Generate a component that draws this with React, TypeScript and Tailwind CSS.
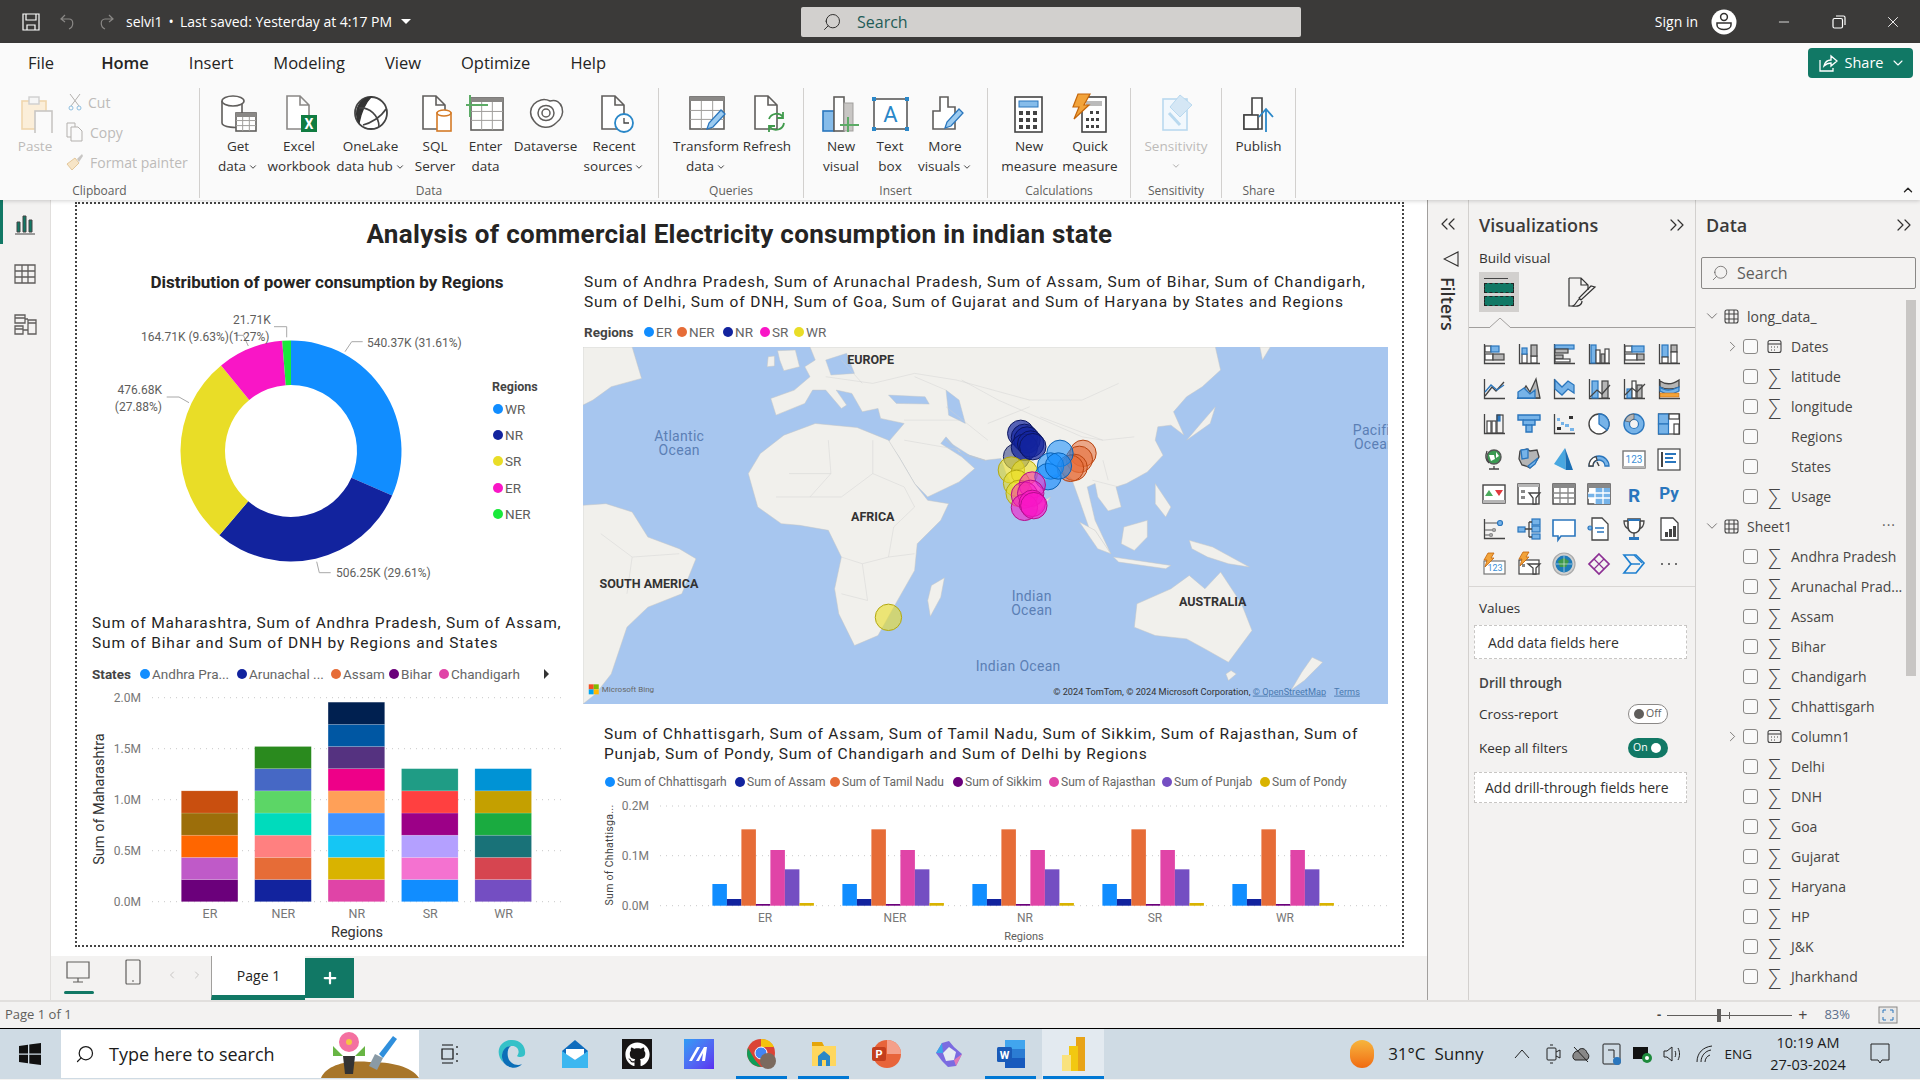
import type { ReactNode } from "react";
import { ChevronDown, ChevronRight, ChevronUp, ChevronsLeft, ChevronsRight, Search, Minus, X, Plus, ChevronLeft } from "lucide-react";
import { FaGithub } from "react-icons/fa";

const din = "font-['Roboto',sans-serif]";

// small svg helpers for the icon sets
const R = (x: number, y: number, w: number, h: number, f = "none", s = "none", sw = 1.2) => (
  <rect x={x} y={y} width={w} height={h} fill={f} stroke={s} strokeWidth={sw} />
);
const P = (d: string, s = "#444", f = "none", sw = 1.3) => <path d={d} stroke={s} fill={f} strokeWidth={sw} />;
const C = (x: number, y: number, r: number, f = "none", s = "none", sw = 1.2) => (
  <circle cx={x} cy={y} r={r} fill={f} stroke={s} strokeWidth={sw} />
);
const d = "#444";
const b = "#2a76bd";
const l = "#76b3e8";
const g = "#b5b5b5";
const ax = P("M2.5 2V21.5H23");
const doc = (c = "#605e5c") => P("M8 3H21L30 12V36H8ZM21 3V12H30", c, "#fff", 1.6);
const bolt = (x = 0, y = 0) => (
  <path transform={`translate(${x} ${y})`} d="M6 0H12L9 5H12L3 14L5 7H2Z" fill="#f2a33a" stroke="#c4650a" strokeWidth="0.8" />
);

const vizIcons: ReactNode[] = [
  <>{ax}{R(3, 4, 6, 6, "#fff", d)}{R(9, 4, 8, 6, l, b)}{R(3, 12, 8, 6, "#fff", d)}{R(11, 12, 11, 6, g, d)}</>,
  <>{ax}{R(5, 12, 5, 9, "#fff", d)}{R(5, 6, 5, 6, l, b)}{R(14, 14, 6, 7, "#fff", d)}{R(14, 3, 6, 11, g, d)}</>,
  <>{ax}{R(3, 3, 19, 4, l, b)}{R(3, 7, 13, 4, g, d)}{R(3, 13, 8, 4, g, d)}{R(3, 17, 15, 3, "#fff", d)}</>,
  <>{ax}{R(4, 3, 5, 18, l, b)}{R(9, 8, 4, 13, "#fff", d)}{R(14, 12, 4, 9, g, d)}{R(18, 7, 4, 14, "#fff", d)}</>,
  <>{ax}{R(3, 4, 7, 6, "#fff", d)}{R(10, 4, 12, 6, l, b)}{R(3, 12, 12, 6, "#fff", d)}{R(15, 12, 7, 6, g, d)}</>,
  <>{ax}{R(5, 3, 6, 12, l, b)}{R(5, 15, 6, 6, "#fff", d)}{R(14, 3, 6, 7, g, d)}{R(14, 10, 6, 11, "#fff", d)}</>,
  <>{ax}{P("M3 19L10 10L14 14L22 5", d)}{P("M3 15L9 8L15 13L22 8", b)}</>,
  <>{P("M1 21H23")}{P("M1 21L9 9L13 15L19 2L23 21Z", d, g)}{P("M1 21L8 12L14 21Z", b, "#fff")}{P("M1 21V15L7 11L13 17L18 13V21Z", b, l)}</>,
  <>{ax}{P("M3 3L10 10L16 4L22 8V16L16 12L10 18L3 12Z", b, l)}</>,
  <>{ax}{R(5, 4, 6, 17, l, b)}{R(15, 4, 6, 17, g, d)}{P("M3 20L10 13L15 17L23 8", d)}</>,
  <>{ax}{R(5, 12, 5, 9, l, b)}{R(10, 4, 4, 17, "#fff", d)}{R(15, 8, 5, 13, g, d)}{P("M3 18L10 11L15 15L23 7", d)}</>,
  <>{ax}{P("M3 4Q12 10 22 3V10Q12 14 3 10Z", d, g)}{P("M3 10Q10 16 22 10V14Q12 20 3 14Z", b, l)}{P("M3 16H22V20H3Z", "#c4650a", "#f2a33a", 0.5)}</>,
  <>{ax}{R(5, 9, 4, 12, "#fff", d)}{R(10, 9, 4, 12, "#fff", d)}{R(15, 3, 3, 6, b, b)}{R(15, 3, 6, 18, "none", d)}</>,
  <>{P("M1 3H23V8H18V13H15V20H9V13H6V8H1Z", b, l, 1.4)}{P("M6 8H18M9 13H15", b)}</>,
  <>{ax}{R(5, 6, 3, 3, l)}{R(9, 10, 3, 3, l)}{R(5, 15, 4, 3, "#333")}{R(13, 12, 4, 3, l)}{R(17, 4, 4, 3, "#333")}{R(18, 16, 4, 3, l)}</>,
  <>{C(12, 12, 10, "#fff", d, 1.4)}{P("M12 2A10 10 0 0 1 20 18L12 12Z", b, l)}</>,
  <>{C(12, 12, 10, l, b, 1.4)}{C(12, 12, 4.5, "#f3f2f1", b)}{P("M12 2A10 10 0 0 0 3 9L8 10A5 5 0 0 1 12 7Z", d, g, 0.6)}</>,
  <>{R(1.5, 2, 21, 20, "#fff", d)}{R(1.5, 2, 10, 10, l, b)}{R(1.5, 12, 10, 10, l, b)}{R(12, 2, 10, 5, "#fff", d)}{R(17, 12, 5, 10, "#fff", d)}</>,
  <>{C(12, 10, 7, "#3a9a52", "#555", 1.4)}{P("M7 8H12L13 12L9 14ZM14 5L17 9L14 11Z", "none", "#fff")}{P("M5 4Q2 12 7 16M12 19V22M7 22H17", d)}</>,
  <>{P("M3 4L10 2L13 4L20 3L22 10L18 16L13 21L9 19L5 18L2 12Z", d, g)}{P("M4 3L11 2L11 11L5 12Z", b, l)}{P("M11 19L21 11L18 17L13 21Z", b, l)}</>,
  <>{P("M13 1L14 23L2 17Z", "none", "#48a7e0")}{P("M13 1L21 23L14 23Z", "none", "#1a6fb4")}</>,
  <>{P("M2 19A10 10 0 0 1 22 19H18A6 6 0 0 0 6 19Z", b, l)}{P("M2 19A10 10 0 0 1 9 9.5L10 13A6 6 0 0 0 6 19Z", d, "#fff")}{P("M12 19L10 15", d, "none", 1.6)}</>,
  <>{R(1, 4, 22, 17, "#fff", "#777", 1.4)}{R(1, 19, 22, 2, g)}<text x="12" y="16" textAnchor="middle" fontSize="10" fill="#3d8fd6" fontFamily="Roboto">123</text></>,
  <>{R(1, 2, 22, 21, "#fff", d)}{R(4, 5, 2, 15, d)}{R(8, 6, 11, 2, b)}{R(8, 10, 8, 2, b)}{R(8, 14, 11, 2, b)}</>,
  <>{R(1, 3, 22, 18, "#fff", d, 1.4)}{R(1, 18, 22, 3, g)}<path d="M3 14L7 8L11 14Z" fill="#4bab5c" /><path d="M13 8H21L17 14Z" fill="#e0393e" /></>,
  <>{R(1, 2, 21, 20, "#fff", d, 1.4)}{R(1, 2, 21, 3, g)}{R(4, 8, 4, 3, "#888")}{R(4, 14, 4, 3, "#888")}{P("M12 11H23L19 16V22H16V16Z", d, "#fff")}</>,
  <>{R(1, 2, 22, 20, "#fff", d, 1.4)}{R(1, 2, 22, 4, "#888")}{P("M1 11H23M1 16H23M8 6V22M16 6V22", "#888")}</>,
  <>{R(1, 2, 22, 20, "#fff", d, 1.4)}{R(1, 2, 22, 4, "#888")}{R(8, 6, 15, 16, l)}{R(1, 11, 7, 5, l)}{P("M1 11H23M1 16H23M8 6V22M16 6V22", "#fff")}</>,
  <><text x="12" y="20" textAnchor="middle" fontSize="19" fontWeight="700" fill="#2a76bd" fontFamily="Roboto">R</text></>,
  <><text x="12" y="17" textAnchor="middle" fontSize="17" fontWeight="700" fill="#2a76bd" fontFamily="Roboto">Py</text></>,
  <>{ax}{P("M3 6H16M3 13H11M3 18H8", "#888")}{C(18, 6, 2.5, l, b)}{C(12, 13, 1.5, g, "#888")}{C(9, 18, 1.5, g, "#888")}</>,
  <>{R(1, 10, 7, 5, l, b)}{R(15, 2, 8, 6, l, b)}{R(15, 9, 8, 6, l, b)}{R(15, 17, 8, 5, l, b)}{P("M8 12H12M12 5V20M12 5H15M12 12H15M12 20H15", d)}</>,
  <>{P("M1 3H23V19H9L6 23V19H1Z", b, "#fff", 1.6)}</>,
  <>{P("M5 1H15L21 7V23H5Z", d, "#fff")}{C(3, 11, 2, l, b)}{P("M8 11H17M10 15H17", b)}</>,
  <>{P("M6 2H18V10A6 6 0 0 1 6 10Z", d, "#fff", 1.6)}{R(6, 2, 12, 2, b)}{P("M6 4H2C2 9 4 11 7 12M18 4H22C22 9 20 11 17 12M12 16V20", d)}{R(7, 20, 10, 3, b)}</>,
  <>{P("M4 1H16L21 6V23H4Z", d, "#fff")}{R(8, 15, 3, 5, "#444")}{R(12, 12, 3, 8, "#444")}{R(16, 9, 3, 11, "#444")}</>,
  <>{R(2, 9, 21, 13, "#fff", "#777")}<text x="13" y="19" textAnchor="middle" fontSize="9" fill="#3d8fd6" fontFamily="Roboto">123</text>{bolt(0, 1)}</>,
  <>{R(2, 8, 20, 14, "#fff", d)}{P("M11 12H23L19 16V22H16V16Z", d, "#fff")}{R(5, 12, 3, 3, "#888")}{bolt(0, 0)}</>,
  <>{C(12, 12, 11, "#d0d0d0", "#aaa")}{C(12, 12, 8.5, "#1e7bb8")}{P("M6 9L12 6L17 9L14 15L8 15Z", "none", "#3f9a4b")}{P("M4 12H20M12 3.5V20", "#e8f2f7", "none", 0.6)}</>,
  <>{P("M12 2L22 12L12 22L2 12Z", "#8c2f94", "none", 1.7)}{P("M7 7L17 17M17 7L7 17", "#8c2f94", "none", 1.2)}</>,
  <>{P("M2 3H14L22 11L14 21H2L9 12Z", "#1f80d0", "none", 1.7)}{P("M9 12H18M12 3L20 11", "#1f80d0")}</>,
  <>{C(5, 12, 1, "#444")}{C(12, 12, 1, "#444")}{C(19, 12, 1, "#444")}</>,
];

const I = ({ children, w = 40 }: { children: ReactNode; w?: number }) => (
  <svg width={w} height="40" viewBox={`0 0 ${w} 40`} className="shrink-0">{children}</svg>
);
const tableGrid = (x: number, y: number, w: number, h: number, c = "#605e5c") => (
  <>
    {R(x, y, w, h, "#fff", c, 1.6)}
    {R(x, y, w, 4, "#8a8886")}
    {P(`M${x} ${y + (h * 0.42)}H${x + w}M${x} ${y + (h * 0.7)}H${x + w}M${x + w / 3} ${y + 4}V${y + h}M${x + (2 * w) / 3} ${y + 4}V${y + h}`, "#a19f9d", "none", 1)}
  </>
);
const pencil = (x: number, y: number) => (
  <path transform={`translate(${x} ${y})`} d="M14 0L18 4L6 17L0 19L2 13Z" fill="#9ccbf0" stroke="#2a76bd" strokeWidth="1.3" />
);
const barsOutline = (c = "#605e5c") => P("M8 36V18H15V4H23V14H30V36Z", c, "#fff", 1.6);

const ribbonIcons: Record<string, ReactNode> = {
  paste: <>{R(7, 8, 24, 28, "#fbeed9", "#f0d6ad", 1.6)}{R(14, 4, 10, 7, "#f6f6f6", "#cfcfcf", 1.4)}{R(20, 18, 17, 23, "#fafafa", "#c8c6c4", 1.6)}</>,
  get: <>{P("M4 8V30C4 34 20 36 24 33V10", "#605e5c", "#fff", 1.6)}<ellipse cx="15" cy="8" rx="11" ry="5" fill="#fff" stroke="#605e5c" strokeWidth="1.6" />{tableGrid(18, 20, 20, 18)}</>,
  excel: <>{doc("#8a8886")}{R(22, 22, 16, 17, "#107c41")}<text x="30" y="36" textAnchor="middle" fontSize="14" fontWeight="700" fill="#fff" fontFamily="Roboto">X</text></>,
  lake: <>{C(20, 20, 16, "#fff", "#444", 1.8)}{P("M20 4C8 6 2 18 8 30C10 20 14 10 20 4Z", "#333", "#333")}{P("M8 15C18 14 28 22 28 34M12 32C20 30 30 24 35 16", "#444", "none", 1.6)}</>,
  sql: <>{doc()}{R(22, 20, 14, 18, "#fff", "#d47a26", 1.6)}<ellipse cx="29" cy="20" rx="7" ry="3" fill="#fff" stroke="#d47a26" strokeWidth="1.6" /></>,
  enter: <>{tableGrid(5, 5, 32, 32)}{P("M4 2V24M-2 12H22", "#5cab66", "none", 2)}</>,
  dataverse: <>{P("M8 28C-2 16 12 2 24 8C36 4 42 22 30 30C24 36 14 36 8 28Z", "#605e5c", "#fff", 1.5)}{P("M12 20C12 10 28 10 28 20C28 30 12 30 12 20Z", "#605e5c", "none", 1.5)}{C(20, 20, 4, "none", "#605e5c", 1.5)}</>,
  recent: <>{doc()}{C(30, 30, 9, "#fff", "#2a87c8", 1.8)}{P("M30 25V30H35", "#444")}</>,
  transform: <>{tableGrid(4, 4, 34, 32)}{pencil(21, 17)}</>,
  refresh: <>{doc()}{P("M22 26A8 8 0 0 1 36 24M37 30A8 8 0 0 1 23 34M36 19V25H30M22 39V33H28", "#3f9a4b", "none", 1.8)}</>,
  newvisual: <>{R(2, 18, 11, 20, "#86bcea", "#2a76bd", 1.6)}{R(13, 4, 10, 34, "#fff", "#605e5c", 1.6)}{R(23, 10, 9, 28, "#c8c6c4", "#a19f9d", 1)}{P("M27 24V39M19 32H38", "#5cab66", "none", 2)}</>,
  textbox: <>{R(4, 6, 33, 30, "#fff", "#444", 1.4)}{R(2, 4, 4, 4, "#2a87c8")}{R(35, 4, 4, 4, "#2a87c8")}{R(2, 34, 4, 4, "#2a87c8")}{R(35, 34, 4, 4, "#2a87c8")}<text x="20.5" y="29" textAnchor="middle" fontSize="22" fill="#2a87c8" fontFamily="Roboto">A</text></>,
  morevisuals: <>{barsOutline()}{pencil(20, 16)}</>,
  measure: <>{R(6, 4, 27, 35, "#fff", "#444", 1.6)}{R(10, 8, 19, 6, "#86bcea", "#2a76bd", 1)}{R(10, 18, 4, 4, "#444")}{R(17, 18, 4, 4, "#444")}{R(24, 18, 4, 4, "#444")}{R(10, 25, 4, 4, "#444")}{R(17, 25, 4, 4, "#444")}{R(24, 25, 4, 4, "#444")}{R(10, 32, 4, 4, "#444")}{R(17, 32, 4, 4, "#444")}{R(24, 32, 4, 4, "#444")}</>,
  quick: <>{R(12, 4, 24, 35, "#fff", "#444", 1.6)}{R(16, 8, 16, 5, "#bbb")}{R(20, 18, 3, 3, "#444")}{R(26, 18, 3, 3, "#444")}{R(16, 25, 3, 3, "#444")}{R(21, 25, 3, 3, "#444")}{R(26, 25, 3, 3, "#444")}{R(16, 32, 3, 3, "#444")}{R(21, 32, 3, 3, "#444")}{R(26, 32, 3, 3, "#444")}<path d="M8 1H20L14 12H19L4 26L9 14H3Z" fill="#f2a33a" stroke="#c4650a" strokeWidth="1.2" /></>,
  sens: <>{R(7, 6, 24, 31, "#f2f8fd", "#b9d9ef", 1.6)}<path d="M24 2L36 12L24 24L14 14Z" fill="#d5e7f5" stroke="#b9d9ef" /><path d="M13 20L24 32" stroke="#b9d9ef" strokeWidth="3" /></>,
  publish: <>{P("M5 36V22H13V5H23V36Z", "#444", "#fff", 1.6)}{R(5, 22, 14, 14, "#fff", "#444", 1.6)}{P("M27 39V16M20 24L27 16L34 24", "#2a87c8", "none", 1.8)}</>,
};

const Caret = () => <ChevronDown size={10} strokeWidth={2.4} className="inline ml-[2px] text-[#444]" />;

function Tool({ icon, a, z, caret, w, off }: { icon: string; a: string; z?: string; caret?: boolean; w: string; off?: boolean }) {
  return (
    <div className={`${w} shrink-0 flex flex-col items-center pt-[5px] ${off ? "text-[#bdbbb9]" : "text-[#323130]"}`}>
      <I>{ribbonIcons[icon]}</I>
      <div className="mt-[3px] leading-[20px] whitespace-nowrap">{a}</div>
      <div className="leading-[20px] whitespace-nowrap h-[20px]">
        {z}
        {caret && <Caret />}
      </div>
    </div>
  );
}

function Group({ name, w, children, pl }: { name: string; w: string; children: ReactNode; pl: string }) {
  return (
    <div className={`${w} h-[110px] shrink-0 border-r border-[#d2d0ce] flex flex-col`}>
      <div className={`flex ${pl}`}>{children}</div>
      <div className="mt-auto text-center text-[12px] leading-[14px] text-[#605e5c]">{name}</div>
    </div>
  );
}

function Ribbon() {
  return (
    <div className="h-[157px] bg-[#fafafa] relative z-10 shadow-[0_1px_4px_rgba(0,0,0,0.18)] text-[13.5px] shrink-0">
      <div className="h-[40px] flex pl-[28px] text-[16.5px] text-[#252423] gap-[40px] items-center">
        <span>File</span>
        <span className="ml-[7px] font-semibold">Home</span>
        <span>Insert</span>
        <span>Modeling</span>
        <span>View</span>
        <span>Optimize</span>
        <span>Help</span>
        <div className="absolute right-[7px] top-[5px] h-[30px] w-[105px] rounded-[4px] bg-[#117865] text-white flex items-center justify-center gap-[7px] pl-[3px] text-[14.5px]">
          <svg width="20" height="20" viewBox="0 0 20 20" fill="none" stroke="#fff" strokeWidth="1.3"><path d="M2 7V18H15V15M6 13C7 9 10 7 13 7V3L19 8L13 13V10C10 10 8 11 6 13Z" /></svg>
          Share
          <ChevronDown size={16} strokeWidth={1.6} />
        </div>
      </div>
      <div className="flex mt-[5px]">
        <Group name="Clipboard" w="w-[200px]" pl="pl-[12px]">
          <Tool icon="paste" a="Paste" w="w-[46px]" off />
          <div className="flex flex-col pl-[10px] -mt-[1px] text-[#bdbbb9] text-[14px]">
            <div className="h-[30px] flex items-center gap-[6px]">
              <svg width="14" height="18" viewBox="0 0 14 18" fill="none" stroke="#b3b0ad"><path d="M2 1L11 13M12 1L3 13" /><circle cx="3" cy="15" r="2" stroke="#8fbfe0" /><circle cx="11" cy="15" r="2" stroke="#8fbfe0" /></svg>
              Cut
            </div>
            <div className="h-[30px] flex items-center gap-[6px] -ml-[2px]">
              <svg width="18" height="20" viewBox="0 0 18 20" fill="#fafafa" stroke="#b3b0ad"><path d="M1 1H9V15H1Z" /><path d="M5 5H12L16 9V19H5Z" /></svg>
              Copy
            </div>
            <div className="h-[30px] flex items-center gap-[6px] -ml-[2px] whitespace-nowrap">
              <svg width="18" height="18" viewBox="0 0 18 18"><path d="M1 11L9 5L13 10L6 17Z" fill="#f7e5c7" stroke="#e3c79a" /><path d="M11 6L16 1L17 3L13 9Z" fill="#c8c6c4" /></svg>
              Format painter
            </div>
          </div>
        </Group>
        <Group name="Data" w="w-[459px]" pl="pl-[8px]">
          <Tool icon="get" a="Get" z="data" caret w="w-[60px]" />
          <Tool icon="excel" a="Excel" z="workbook" w="w-[62px]" />
          <Tool icon="lake" a="OneLake" z="data hub" caret w="w-[81px]" />
          <Tool icon="sql" a="SQL" z="Server" w="w-[48px]" />
          <Tool icon="enter" a="Enter" z="data" w="w-[53px]" />
          <Tool icon="dataverse" a="Dataverse" w="w-[67px]" />
          <Tool icon="recent" a="Recent" z="sources" caret w="w-[70px]" />
        </Group>
        <Group name="Queries" w="w-[145px]" pl="pl-[14px]">
          <Tool icon="transform" a="Transform" z="data" caret w="w-[66px]" />
          <Tool icon="refresh" a="Refresh" w="w-[56px]" />
        </Group>
        <Group name="Insert" w="w-[184px]" pl="pl-[7px]">
          <Tool icon="newvisual" a="New" z="visual" w="w-[60px]" />
          <Tool icon="textbox" a="Text" z="box" w="w-[38px]" />
          <Tool icon="morevisuals" a="More" z="visuals" caret w="w-[72px]" />
        </Group>
        <Group name="Calculations" w="w-[143px]" pl="pl-[6px]">
          <Tool icon="measure" a="New" z="measure" w="w-[70px]" />
          <Tool icon="quick" a="Quick" z="measure" w="w-[52px]" />
        </Group>
        <Group name="Sensitivity" w="w-[91px]" pl="pl-0">
          <div className="w-full flex flex-col items-center pt-[5px] text-[#bdbbb9]">
            <I>{ribbonIcons.sens}</I>
            <div className="mt-[3px] leading-[20px]">Sensitivity</div>
            <ChevronDown size={10} strokeWidth={2} className="mt-[5px] text-[#a19f9d]" />
          </div>
        </Group>
        <Group name="Share" w="w-[74px]" pl="pl-0">
          <Tool icon="publish" a="Publish" w="w-full" />
        </Group>
      </div>
      <ChevronUp size={14} strokeWidth={2.4} className="absolute right-[5px] bottom-[3px] text-[#252423]" />
    </div>
  );
}

function TitleBar() {
  return (
    <div className="h-[43px] bg-[#3b3a39] flex items-center text-white text-[14px] shrink-0">
      <div className="w-[801px] flex items-center">
        <svg width="20" height="20" viewBox="0 0 20 20" fill="none" stroke="#fff" strokeWidth="1.2" className="ml-[21px]"><path d="M2 2H18V18H2ZM5 2V8H15V2M6 18V13H14V18" /></svg>
        <svg width="18" height="18" viewBox="0 0 18 18" fill="none" stroke="#8a8886" strokeWidth="1.2" className="ml-[18px]"><path d="M6 2L2 6L6 9M2 6H10C15 6 15 14 10 16" /></svg>
        <svg width="18" height="18" viewBox="0 0 18 18" fill="none" stroke="#8a8886" strokeWidth="1.2" className="ml-[20px]"><path d="M12 2L16 6L12 9M16 6H8C3 6 3 14 8 16" /></svg>
        <span className="ml-[11px] whitespace-nowrap">selvi1<span className="mx-[6px]">•</span>Last saved: Yesterday at 4:17 PM</span>
        <span className="ml-[9px] w-0 h-0 border-x-[5px] border-x-transparent border-t-[5px] border-t-white" />
      </div>
      <div className="w-[500px] h-[30px] bg-[#d2d0ce] rounded-[2px] flex items-center pl-[21px] gap-[15px] text-[16px] text-[#1f5c57] relative">
        <Search size={20} strokeWidth={1.2} className="text-[#323130] -scale-x-100" />
        Search
      </div>
      <div className="flex-1 flex items-center justify-end">
        <span className="mr-[13px]">Sign in</span>
        <svg width="26" height="26" viewBox="0 0 26 26"><circle cx="13" cy="13" r="12.5" fill="#fff" /><circle cx="13" cy="8" r="3.4" fill="none" stroke="#323130" strokeWidth="1.5" /><path d="M6 14H20V16C20 22 6 22 6 16Z" fill="none" stroke="#323130" strokeWidth="1.5" /></svg>
        <Minus size={16} strokeWidth={1.2} className="ml-[39px]" />
        <svg width="14" height="14" viewBox="0 0 14 14" fill="none" stroke="#fff" strokeWidth="1.2" className="ml-[40px]"><rect x="1" y="3.5" width="9.5" height="9.5" rx="1.5" /><path d="M4 1H11.5A1.5 1.5 0 0 1 13 2.5V10" /></svg>
        <X size={18} strokeWidth={1.2} className="ml-[38px] mr-[18px]" />
      </div>
    </div>
  );
}

// report visuals
const slices = [
  { v: 31.61, c: "#118dff" },
  { v: 29.61, c: "#12239e" },
  { v: 27.88, c: "#e9dd27" },
  { v: 9.63, c: "#f916c6" },
  { v: 1.27, c: "#19e93a" },
];
function arc(a0: number, a1: number) {
  const cx = 291, cy = 451, ro = 110.5, ri = 66;
  const pt = (r: number, a: number) => `${cx + r * Math.sin(a)} ${cy - r * Math.cos(a)}`;
  const large = a1 - a0 > Math.PI ? 1 : 0;
  return `M${pt(ro, a0)}A${ro} ${ro} 0 ${large} 1 ${pt(ro, a1)}L${pt(ri, a1)}A${ri} ${ri} 0 ${large} 0 ${pt(ri, a0)}Z`;
}

function Donut() {
  let acc = 0;
  const t = "#605e5c";
  return (
    <svg width="506" height="295" viewBox="77 295 506 295" fontFamily="Roboto" fontSize="12" fill={t} className="block">
      {slices.map((s) => {
        const a0 = (acc / 100) * Math.PI * 2;
        acc += s.v;
        return <path key={s.c} d={arc(a0, (acc / 100) * Math.PI * 2)} fill={s.c} />;
      })}
      <g fill="none" stroke="#a8a8a8">
        <path d="M345 351.7L351.7 341.7H362.7" />
        <path d="M274 326.7H286.7V337.3" />
        <path d="M235.7 335.3H243.3L248.3 346" />
        <path d="M166.7 397H179L189 402.7" />
        <path d="M316.7 561.7L319.3 572.7H330.7" />
      </g>
      <text x="233" y="324">21.71K</text>
      <text x="141" y="341">164.71K (9.63%)</text>
      <text x="229" y="341">(1.27%)</text>
      <text x="367" y="347">540.37K (31.61%)</text>
      <text x="162" y="394" textAnchor="end">476.68K</text>
      <text x="162" y="411" textAnchor="end">(27.88%)</text>
      <text x="336" y="577">506.25K (29.61%)</text>
      <text x="492" y="391" fontWeight="700" fontSize="12.5" fill="#444">Regions</text>
      {[["WR", "#118dff", 409], ["NR", "#12239e", 435], ["SR", "#e9dd27", 461], ["ER", "#f916c6", 488], ["NER", "#19e93a", 514]].map(([n, c, y]) => (
        <g key={n as string}>
          <circle cx="498" cy={y as number} r="5" fill={c as string} />
          <text x="505" y={(y as number) + 5} fontSize="13.5">{n}</text>
        </g>
      ))}
    </svg>
  );
}

const stacks: string[][] = [
  ["#6b007b", "#bf5ac8", "#ff6600", "#9c6e0a", "#c94f0f"],
  ["#12239e", "#e66c37", "#ff8080", "#00dbbc", "#5cd666", "#4668c5", "#2a8a1e"],
  ["#e044a7", "#d9b300", "#15c6f4", "#4092ff", "#ffa058", "#ee0088", "#553280", "#0057a3", "#002050"],
  ["#118dff", "#f472d0", "#b4a0ff", "#9c0087", "#ff4040", "#1f9c85"],
  ["#744ec2", "#d64550", "#197278", "#1aab40", "#c4a000", "#0093d5"],
];
const regions = ["ER", "NER", "NR", "SR", "WR"];

function StackedChart() {
  const gy = [901.7, 850.7, 799.7, 748.7, 697.7];
  return (
    <svg width="506" height="260" viewBox="77 685 506 260" fontFamily="Roboto" fontSize="12" fill="#777" className="block">
      {gy.map((y, i) => (
        <g key={y}>
          <path d={`M152 ${y}H563`} stroke="#c8c8c8" strokeDasharray="1 5" />
          <text x="141" y={y + 4} textAnchor="end">{["0.0M", "0.5M", "1.0M", "1.5M", "2.0M"][i]}</text>
        </g>
      ))}
      {stacks.map((st, i) =>
        st.map((c, j) => <rect key={c} x={181.3 + i * 73.4} y={901.7 - (j + 1) * 22.17} width="56.6" height="22.17" fill={c} stroke="#fff" strokeOpacity="0.25" strokeWidth="0.6" />),
      )}
      {regions.map((n, i) => (
        <text key={n} x={210 + i * 73.4} y="918" textAnchor="middle" fontSize="12.5">{n}</text>
      ))}
      <text x="357" y="937" textAnchor="middle" fontSize="14.5" fill="#333">Regions</text>
      <text transform="translate(104 799) rotate(-90)" textAnchor="middle" fontSize="14.5" fill="#333">Sum of Maharashtra</text>
    </svg>
  );
}

const clustered = [
  { c: "#118dff", t: 522 },
  { c: "#12239e", t: 567 },
  { c: "#e66c37", t: 358 },
  { c: "#6b007b", t: 582 },
  { c: "#e044a7", t: 420 },
  { c: "#744ec2", t: 478 },
  { c: "#d9b300", t: 579 },
];

function ClusterChart() {
  return (
    <svg width="821" height="153" viewBox="583 792 821 153" fontFamily="Roboto" fontSize="12" fill="#777" className="block">
      {[[806, "0.2M"], [855.7, "0.1M"], [905.7, "0.0M"]].map(([y, n]) => (
        <g key={n as string}>
          <path d={`M660 ${y}H1390`} stroke="#c8c8c8" strokeDasharray="1 5" />
          <text x="649" y={(y as number) + 4} textAnchor="end">{n}</text>
        </g>
      ))}
      {regions.map((n, i) => (
        <g key={n}>
          {clustered.map((b, j) => {
            const top = 710 + b.t / 3;
            return <rect key={b.c} x={712.4 + i * 130 + j * 14.5} y={top} width="14.5" height={905.7 - top} fill={b.c} />;
          })}
          <text x={765 + i * 130} y="922" textAnchor="middle">{n}</text>
        </g>
      ))}
      <text x="1024" y="940" textAnchor="middle" fontSize="11" fill="#605e5c">Regions</text>
      <text transform="translate(613 855) rotate(-90)" textAnchor="middle" fontSize="10.5" letterSpacing="0.3" fill="#444">Sum of Chhattisga...</text>
    </svg>
  );
}

const mx = (x: number) => (x - 6) / 1.912;
const my = (y: number) => (y - 21) / 3;
// coastlines, traced in the map's own coordinates
const land = [
  "M6 21H100L118 115L60 140L25 180L6 195Z",
  "M440 21L1215 21L1225 90L1190 140L1160 170L1135 215L1155 285L1130 255L1105 260L1100 300L1115 345L1085 395L1045 430L1025 440L1035 500L1010 512L990 470L985 430L970 440L985 540L1015 640L975 570L955 480L940 415L925 395L895 410L870 470L855 505L838 470L815 400L805 355L775 360L725 335L700 290L690 310L730 350L755 385L725 425L665 470L640 430L610 350L590 305L620 250L575 235L570 205L540 215L520 160L490 150L510 195L500 205L470 150L445 150L430 190L375 225L365 175L410 150L440 110L430 80L450 60Z",
  "M390 285L450 250L530 262L590 300L610 350L640 430L665 480L705 490L690 540L645 610L640 690L600 800L570 885L525 915L495 820L487 745L500 650L475 570L420 555L385 550L340 500L322 400L345 340Z",
  "M6 495L50 490L100 515L130 590L190 625L222 655L195 760L130 800L90 860L60 1000L30 1060L6 1090Z",
  "M1065 790L1130 745L1165 705L1195 745L1225 695L1265 790L1285 870L1240 965L1195 925L1160 895L1100 885L1060 860Z",
  "M697 712L690 770L670 828L665 780L672 735Z",
  "M1400 950L1420 965L1385 1020L1360 1048L1380 995Z",
  "M1245 990L1255 1000L1240 1020L1235 1000Z",
  "M1165 600L1210 620L1280 680L1240 670L1200 650L1170 625Z",
  "M1040 560L1085 540L1085 590L1060 630L1035 610Z",
  "M955 545L985 570L1015 640L990 625Z",
  "M1020 650L1130 675L1120 685L1030 665Z",
  "M1100 430L1130 500L1120 530L1100 490Z",
  "M1215 200L1205 250L1160 300L1190 245Z",
  "M378 32L412 30L420 80L390 92L382 60Z",
  "M360 50L372 48L372 78L358 80Z",
  "M900 470L880 510L865 505Z",
  "M1300 21L1320 21L1305 60Z",
];
const seas = [
  "M590 165L660 170L668 192L605 190Z",
  "M700 150L725 180L737 250L705 225Z",
  "M470 60L510 40L525 100L480 105Z",
  "M700 300L745 345L775 360L735 345Z",
];
const borders = "M475 300L480 400L440 470L500 470L560 400L560 300M560 400L620 440L640 500L600 560L590 650L540 670L500 650M540 670L550 780L500 760M590 650L640 640M400 400H480M375 470L440 470M40 580L100 650L90 760M100 650L190 640M470 110L560 130L640 100L720 120L860 180L960 180L1030 130M780 250L860 200M700 200L780 300M620 240L730 240M880 230L1000 300L1060 290M800 180L880 235L960 290L1000 300M640 110L700 150M500 60L540 130M730 120L800 180M620 300L730 330M1000 360L1010 420M980 420L1030 440";
const edge: Record<string, string> = { "#12239e": "#0b1560", "#3d4a8a": "#1c2560", "#e9dd27": "#b3a80f", "#e66c37": "#b8430f", "#118dff": "#0b62b5", "#f916c6": "#b50c8d" };
const bubbles: [number, number, string, number][] = [
  [835, 350, "#3d4a8a", 0.6],
  [843, 280, "#12239e", 0.7], [850, 292, "#12239e", 0.7], [855, 300, "#12239e", 0.7], [850, 322, "#12239e", 0.7], [862, 312, "#12239e", 0.7], [866, 320, "#12239e", 0.7],
  [825, 390, "#e9dd27", 0.6], [850, 398, "#e9dd27", 0.6], [835, 430, "#e9dd27", 0.6], [840, 460, "#e9dd27", 0.6], [590, 832, "#e9dd27", 0.6],
  [962, 340, "#e66c37", 0.55], [955, 358, "#e66c37", 0.55], [945, 382, "#e66c37", 0.55], [938, 385, "#e66c37", 0.55],
  [918, 340, "#118dff", 0.55], [900, 378, "#118dff", 0.55], [895, 410, "#118dff", 0.55], [915, 378, "#118dff", 0.55],
  [865, 435, "#f916c6", 0.5], [850, 465, "#f916c6", 0.45], [862, 460, "#f916c6", 0.5], [850, 502, "#f916c6", 0.6], [865, 490, "#f916c6", 0.7], [868, 497, "#f916c6", 0.65],
];

function MapVisual() {
  const seaLabel = "#5b7fb5";
  return (
    <div className="w-[805px] h-[357px] bg-[#a7c6ef] relative overflow-hidden">
      <svg width="805" height="357" viewBox="6 21 1539 1069" preserveAspectRatio="none" className="absolute inset-0">
        {land.map((p) => <path key={p} d={p} fill="#f1f0ec" stroke="#c4c6c6" strokeWidth="1.2" />)}
        {seas.map((p) => <path key={p} d={p} fill="#a7c6ef" stroke="#c4c6c6" strokeWidth="1" />)}
        <path d={borders} fill="none" stroke="#cfcfcf" strokeWidth="1" />
      </svg>
      <svg width="805" height="357" viewBox="0 0 805 357" className="absolute inset-0" fontFamily="Roboto">
        {bubbles.map(([x, y, c, o], i) => (
          <circle key={i} cx={mx(x)} cy={my(y)} r="13.2" fill={c} fillOpacity={o} stroke={edge[c]} strokeWidth="1" />
        ))}
        <g fontSize="12.5" fontWeight="700" fill="#333" textAnchor="middle">
          <text x={mx(556)} y={my(72)}>EUROPE</text>
          <text x={mx(560)} y={my(544)}>AFRICA</text>
          <text x={mx(132)} y={my(743)}>SOUTH AMERICA</text>
          <text x={mx(1210)} y={my(799)}>AUSTRALIA</text>
        </g>
        <g fontSize="14" letterSpacing="0.3" fill={seaLabel} textAnchor="middle">
          <text x={mx(190)} y={my(304)}>Atlantic</text>
          <text x={mx(190)} y={my(346)}>Ocean</text>
          <text x={mx(864)} y={my(784)}>Indian</text>
          <text x={mx(864)} y={my(824)}>Ocean</text>
          <text x={mx(838)} y={my(994)}>Indian Ocean</text>
          <text x={mx(1478)} y={my(284)} textAnchor="start">Pacific</text>
          <text x={mx(1480)} y={my(326)} textAnchor="start">Ocean</text>
        </g>
        <g transform={`translate(${mx(17)} ${my(1033)})`}>
          <rect width="5" height="5" fill="#f25022" /><rect x="5" width="5" height="5" fill="#7fba00" /><rect y="5" width="5" height="5" fill="#00a4ef" /><rect x="5" y="5" width="5" height="5" fill="#ffb900" />
        </g>
        <text x={mx(42)} y={my(1056)} fontSize="8" fill="#666">Microsoft Bing</text>
        <text x={mx(905)} y={my(1064)} fontSize="9.2" fill="#333">© 2024 TomTom, © 2024 Microsoft Corporation, <tspan textDecoration="underline" fill="#4a7ab0">© OpenStreetMap</tspan><tspan dx="8" textDecoration="underline" fill="#4a7ab0">Terms</tspan></text>
      </svg>
    </div>
  );
}

const Dot = ({ c, n, cls }: { c: string; n: string; cls: string }) => (
  <span className={`flex items-center gap-[2px] ${cls}`}>
    <span className={`w-[10px] h-[10px] rounded-full shrink-0 ${c}`} />
    {n}
  </span>
);

function ReportPage() {
  return (
    <div className={`w-[1329px] h-[745px] bg-white border-2 border-dotted border-[#444] ${din}`}>
      <h1 className="h-[56px] pt-[14px] text-center text-[26px] leading-[32px] font-bold text-[#252423] tracking-[0.3px]">
        Analysis of commercial Electricity consumption in indian state
      </h1>
      <div className="flex">
        <div className="w-[506px] shrink-0">
          <h2 className="pl-[15px] h-[35px] w-[485px] pt-[12px] text-center text-[17px] leading-[20px] font-bold text-[#252423] whitespace-nowrap">Distribution of power consumption by Regions</h2>
          <Donut />
          <div className="pl-[15px] pt-[23px] text-[15.5px] leading-[20px] text-[#252423] tracking-[0.85px] h-[75px] whitespace-nowrap">
            Sum of Maharashtra, Sum of Andhra Pradesh, Sum of Assam,<br />Sum of Bihar and Sum of DNH by Regions and States
          </div>
          <div className="pl-[15px] -mt-[2px] h-[22px] flex items-center text-[13.5px] text-[#666] relative whitespace-nowrap">
            <b className="text-[#444] w-[48px]">States</b>
            <Dot c="bg-[#118dff]" n="Andhra Pra..." cls="w-[97px]" />
            <Dot c="bg-[#12239e]" n="Arunachal ..." cls="w-[94px]" />
            <Dot c="bg-[#e66c37]" n="Assam" cls="w-[58px]" />
            <Dot c="bg-[#6b007b]" n="Bihar" cls="w-[50px]" />
            <Dot c="bg-[#e044a7]" n="Chandigarh" cls="w-[90px]" />
            <span className="ml-[15px] w-0 h-0 border-y-[5px] border-y-transparent border-l-[5px] border-l-[#333]" />
          </div>
          <StackedChart />
        </div>
        <div className="flex-1">
          <div className="pl-[1px] pt-[12px] h-[65px] text-[15.5px] leading-[20px] text-[#252423] tracking-[0.87px] whitespace-nowrap">
            Sum of Andhra Pradesh, Sum of Arunachal Pradesh, Sum of Assam, Sum of Bihar, Sum of Chandigarh,<br />Sum of Delhi, Sum of DNH, Sum of Goa, Sum of Gujarat and Sum of Haryana by States and Regions
          </div>
          <div className="pl-[1px] h-[26px] -mt-[6px] mb-[2px] flex items-center text-[13.5px] text-[#666]">
            <b className="text-[#444] w-[60px]">Regions</b>
            <Dot c="bg-[#118dff]" n="ER" cls="w-[33px]" />
            <Dot c="bg-[#e66c37]" n="NER" cls="w-[46px]" />
            <Dot c="bg-[#12239e]" n="NR" cls="w-[37px]" />
            <Dot c="bg-[#f916c6]" n="SR" cls="w-[34px]" />
            <Dot c="bg-[#e9dd27]" n="WR" cls="w-[40px]" />
          </div>
          <MapVisual />
          <div className="pl-[21px] pt-[20px] h-[78px] text-[15.5px] leading-[20px] text-[#252423] tracking-[0.8px] whitespace-nowrap">
            Sum of Chhattisgarh, Sum of Assam, Sum of Tamil Nadu, Sum of Sikkim, Sum of Rajasthan, Sum of<br />Punjab, Sum of Pondy, Sum of Chandigarh and Sum of Delhi by Regions
          </div>
          <div className="pl-[22px] -mt-[10px] h-[20px] flex items-center text-[12px] text-[#666] whitespace-nowrap">
            <Dot c="bg-[#118dff]" n="Sum of Chhattisgarh" cls="w-[130px]" />
            <Dot c="bg-[#12239e]" n="Sum of Assam" cls="w-[95px]" />
            <Dot c="bg-[#e66c37]" n="Sum of Tamil Nadu" cls="w-[123px]" />
            <Dot c="bg-[#6b007b]" n="Sum of Sikkim" cls="w-[96px]" />
            <Dot c="bg-[#e044a7]" n="Sum of Rajasthan" cls="w-[113px]" />
            <Dot c="bg-[#744ec2]" n="Sum of Punjab" cls="w-[98px]" />
            <Dot c="bg-[#d9b300]" n="Sum of Pondy" cls="w-[96px]" />
          </div>
          <ClusterChart />
        </div>
      </div>
    </div>
  );
}

function VizPane() {
  return (
    <div className="w-[227px] shrink-0 border-l border-[#d2d0ce] text-[#323130] text-[14px]">
      <div className="h-[50px] flex items-center justify-between pl-[10px] pr-[6px]">
        <span className="text-[18px] font-semibold text-[#3b3a39]">Visualizations</span>
        <ChevronsRight size={24} strokeWidth={1.2} />
      </div>
      <div className="pl-[10px] h-[16px] leading-[16px] text-[13.5px] font-medium">Build visual</div>
      <div className="mt-[6px] ml-[10px] h-[40px] flex items-center">
        <div className="w-[40px] h-[40px] bg-[#d2d0ce] flex flex-col justify-center gap-[3px] px-[5px]">
          <div className="h-[1px] w-[24px] bg-[#444] mb-[1px]" />
          <div className="h-[10px] bg-[#117865] border border-dashed border-[#222]" />
          <div className="h-[10px] bg-[#117865] border border-dashed border-[#222]" />
        </div>
        <svg width="32" height="32" viewBox="0 0 32 32" fill="none" stroke="#333" strokeWidth="1.2" className="ml-[47px]"><path d="M3 2H15L22 9V14M15 2V9H22M3 2V30H8" /><path d="M29 11L15 24L13 22L25 10ZM14 23C11 23 11 28 7 30C12 31 16 29 16 25" /></svg>
      </div>
      <div className="mt-[15px] h-px bg-[#a19f9d] relative">
        <svg width="22" height="10" viewBox="0 0 22 10" className="absolute left-[20px] -top-[9px]"><path d="M0 10L11 0L22 10" fill="#f3f2f1" stroke="#a19f9d" /></svg>
      </div>
      <div className="mt-[8px] grid grid-cols-[repeat(6,35px)] auto-rows-[35px] pl-[7px]">
        {vizIcons.map((ic, i) => (
          <div key={i} className="flex items-center justify-center">
            <svg width="24" height="24" viewBox="0 0 24 24" className="overflow-visible">{ic}</svg>
          </div>
        ))}
      </div>
      <div className="mt-[5px] h-px bg-[#d8d6d4]" />
      <div className="ml-[5px] mr-[8px]">
        <div className="pl-[5px] mt-[12px] h-[18px] leading-[18px] text-[13.5px]">Values</div>
        <div className="mt-[8px] h-[34px] bg-white border border-dashed border-[#c8c6c4] flex items-center pl-[13px] text-[14px]">Add data fields here</div>
        <div className="pl-[5px] mt-[14px] h-[20px] leading-[20px] font-semibold text-[13.5px] text-[#444]">Drill through</div>
        <div className="pl-[5px] mt-[11px] h-[20px] flex items-center justify-between pr-[19px] text-[13.5px]">
          Cross-report
          <span className="w-[40px] h-[20px] rounded-full border border-[#8a8886] bg-white flex items-center pl-[5px] gap-[2px] text-[10.5px] text-[#605e5c]">
            <span className="w-[10px] h-[10px] rounded-full bg-[#605e5c]" />Off
          </span>
        </div>
        <div className="pl-[5px] mt-[14px] h-[20px] flex items-center justify-between pr-[19px] text-[13.5px]">
          Keep all filters
          <span className="w-[40px] h-[20px] rounded-full bg-[#117865] flex items-center pl-[5px] gap-[3px] text-[10.5px] text-white">
            On<span className="w-[10px] h-[10px] rounded-full bg-white" />
          </span>
        </div>
        <div className="mt-[14px] h-[31px] bg-white border border-dashed border-[#c8c6c4] flex items-center pl-[10px] text-[14px] whitespace-nowrap">Add drill-through fields here</div>
      </div>
    </div>
  );
}

const tableIcon = (
  <svg width="15" height="15" viewBox="0 0 15 15" fill="none" stroke="#444" strokeWidth="1.1"><rect x="1" y="1" width="13" height="13" rx="2" /><path d="M1 5H14M1 10H14M5 1V14M10 1V14" /></svg>
);
const calIcon = (
  <svg width="15" height="15" viewBox="0 0 15 15" fill="none" stroke="#444" strokeWidth="1.1"><rect x="1" y="1.5" width="13" height="12" rx="2" /><path d="M1 5H14" /><path d="M4 8H5M7 8H8M10 8H11M4 11H5M7 11H8" /></svg>
);
const sigma = <span className="block w-[15px] text-center text-[21px] leading-[15px] text-[#444] font-light">∑</span>;

const fields: [string, "s" | "c" | "n", boolean?][] = [
  ["Andhra Pradesh", "s"], ["Arunachal Prad...", "s"], ["Assam", "s"], ["Bihar", "s"], ["Chandigarh", "s"], ["Chhattisgarh", "s"],
  ["Column1", "c", true], ["Delhi", "s"], ["DNH", "s"], ["Goa", "s"], ["Gujarat", "s"], ["Haryana", "s"], ["HP", "s"], ["J&K", "s"], ["Jharkhand", "s"],
];
const longData: [string, "s" | "c" | "n", boolean?][] = [
  ["Dates", "c", true], ["latitude", "s"], ["longitude", "s"], ["Regions", "n"], ["States", "n"], ["Usage", "s"],
];

function FieldRow({ f }: { f: [string, "s" | "c" | "n", boolean?] }) {
  return (
    <div className="h-[30px] flex items-center pl-[28px] whitespace-nowrap">
      <span className="w-[19px]">{f[2] && <ChevronRight size={17} strokeWidth={1.1} className="text-[#605e5c]" />}</span>
      <span className="w-[15px] h-[15px] border border-[#8a8886] rounded-[3px] bg-[#fafafa]" />
      <span className="ml-[9px] w-[15px]">{f[1] === "s" ? sigma : f[1] === "c" ? calIcon : null}</span>
      <span className="ml-[9px]">{f[0]}</span>
    </div>
  );
}

function TableRow({ n, more }: { n: string; more?: boolean }) {
  return (
    <div className="h-[30px] flex items-center pl-[7px] relative">
      <ChevronDown size={18} strokeWidth={1.1} className="text-[#605e5c]" />
      <span className="ml-[3px]">{tableIcon}</span>
      <span className="ml-[8px]">{n}</span>
      {more && <span className="absolute left-[186px] -top-[1px] text-[#605e5c] tracking-[1px]">...</span>}
    </div>
  );
}

function DataPane() {
  return (
    <div className="w-[225px] shrink-0 border-l border-[#d2d0ce] text-[14px] text-[#484644] relative overflow-hidden">
      <div className="h-[50px] flex items-center justify-between pl-[10px] pr-[4px]">
        <span className="text-[18px] font-semibold text-[#3b3a39]">Data</span>
        <ChevronsRight size={24} strokeWidth={1.2} className="text-[#323130]" />
      </div>
      <div className="mt-[7px] ml-[5px] w-[215px] h-[32px] border border-[#8a8886] rounded-[2px] flex items-center pl-[9px] gap-[8px] text-[16px] text-[#605e5c]">
        <Search size={18} strokeWidth={1} className="-scale-x-100" />
        Search
      </div>
      <div className="mt-[12px]">
        <TableRow n="long_data_" />
        {longData.map((f) => <FieldRow key={f[0]} f={f} />)}
        <TableRow n="Sheet1" more />
        {fields.map((f) => <FieldRow key={f[0]} f={f} />)}
      </div>
      <div className="absolute left-[210px] top-[100px] w-[10px] h-[376px] bg-[#c8c6c4]" />
    </div>
  );
}

const Tile = ({ children, cls = "" }: { children: ReactNode; cls?: string }) => (
  <div className={`w-[62.3px] h-full flex items-center justify-center relative shrink-0 ${cls}`}>{children}</div>
);
const Under = ({ w = "w-[51px]" }: { w?: string }) => <span className={`absolute bottom-0 h-[3px] bg-[#0078d4] ${w}`} />;

function Taskbar() {
  return (
    <div className="h-[51px] flex items-center bg-[#cfdbe4] border-t border-black text-[#1b1b1b] shrink-0 relative">
      <svg width="22" height="22" viewBox="0 0 22 22" fill="#111" className="ml-[19px] mr-[20px] shrink-0"><path d="M0 3L9 1.8V10.5H0ZM10.3 1.6L22 0V10.5H10.3ZM0 11.7H9V20.2L0 19ZM10.3 11.7H22V22L10.3 20.4Z" /></svg>
      <div className="w-[358px] h-[48px] bg-white flex items-center pl-[14px] text-[18px] relative shrink-0">
        <Search size={20} strokeWidth={1.5} className="-scale-x-100 mr-[14px]" />
        Type here to search
        <svg width="100" height="48" viewBox="0 0 100 48" className="absolute right-0 top-0">
          <path d="M2 48C8 34 30 30 50 32C72 32 92 36 100 48Z" fill="#a8762a" />
          <path d="M24 26H36L34 44H26Z" fill="#333" />
          <circle cx="30" cy="12" r="10" fill="#f470a0" /><circle cx="30" cy="12" r="3" fill="#f5c542" />
          <path d="M14 16L24 26L14 26ZM46 16L36 26L46 26Z" fill="#68b544" />
          <path d="M50 36L56 24L64 28L58 40Z" fill="#8a9aa5" /><path d="M60 24L74 6L78 9L64 28Z" fill="#2f8fdc" />
        </svg>
      </div>
      <Tile><svg width="20" height="22" viewBox="0 0 20 22" fill="none" stroke="#111" strokeWidth="1.2"><path d="M2 2H13M2 20H13M2 6H13V16H2ZM17 3V5M17 10V12M17 17V19" /></svg></Tile>
      <Tile><svg width="30" height="30" viewBox="0 0 30 30"><path d="M15 1C24 1 29 8 28 15C28 18 22 19 20 17C24 12 20 6 14 7C6 8 3 17 7 24C2 20 1 14 2 10C4 4 9 1 15 1Z" fill="#35c1c8" /><path d="M7 24C2 16 7 7 14 7C11 9 10 13 11 18C12 24 20 28 25 25C20 31 11 29 7 24Z" fill="#0c6fb8" /></svg></Tile>
      <Tile><svg width="30" height="30" viewBox="0 0 30 30"><path d="M15 1L28 12V29H2V12Z" fill="#0f6cbd" /><path d="M2 12L15 21L28 12V29H2Z" fill="#3cb7f0" /><path d="M6 10H24V15L15 21L6 15Z" fill="#fff" /></svg></Tile>
      <Tile><span className="w-[30px] h-[30px] bg-[#171515] flex items-center justify-center"><FaGithub className="text-white" size={25} /></span></Tile>
      <Tile><span className="w-[30px] h-[30px] bg-gradient-to-br from-[#2d9cf5] to-[#5b2bf0] flex items-center justify-center"><svg width="20" height="14" viewBox="0 0 20 14" fill="#fff"><path d="M0 14L8 0H11L3 14ZM7 14L15 0H18L16 14H13L14 6L10 14Z" /></svg></span></Tile>
      <Tile>
        <svg width="32" height="32" viewBox="0 0 32 32"><circle cx="15" cy="15" r="14" fill="#db4437" /><path d="M15 1A14 14 0 0 1 28 9H15Z" fill="#f4c20d" /><path d="M2 10L9 22L15 29A14 14 0 0 1 2 10Z" fill="#0f9d58" /><circle cx="15" cy="15" r="6" fill="#4285f4" stroke="#fff" /><circle cx="22" cy="23" r="8" fill="#7b6a5e" /></svg>
        <Under />
      </Tile>
      <Tile>
        <svg width="28" height="28" viewBox="0 0 28 28"><path d="M2 2H12L14 6H26V26H2Z" fill="#ffd75e" /><path d="M2 2H12L14 6H2Z" fill="#e5a50a" /><path d="M8 26V16L14 11L20 16V26H16V20H12V26Z" fill="#2a87c8" /></svg>
        <Under />
      </Tile>
      <Tile><svg width="30" height="30" viewBox="0 0 30 30"><circle cx="16" cy="15" r="14" fill="#e8643a" /><path d="M16 1A14 14 0 0 1 30 15H16Z" fill="#f4a08a" /><rect x="1" y="8" width="14" height="14" rx="2" fill="#c43e1c" /><text x="8" y="19" textAnchor="middle" fontSize="11" fontWeight="700" fill="#fff" fontFamily="Roboto">P</text></svg></Tile>
      <Tile><svg width="30" height="30" viewBox="0 0 30 30"><path d="M8 4L15 2L20 8L28 15L22 27L14 28L8 22L2 14Z" fill="#7b6be0" /><path d="M15 8L22 13L20 21L12 22L9 14Z" fill="#e6ecf2" /><path d="M8 4L9 14L2 14Z" fill="#3ba6e8" /><path d="M22 27L20 21L28 15Z" fill="#e27bb5" /></svg></Tile>
      <Tile>
        <svg width="32" height="32" viewBox="0 0 32 32"><rect x="10" y="2" width="20" height="28" rx="2" fill="#2b7cd3" /><rect x="10" y="2" width="20" height="9" fill="#41a5ee" /><rect x="10" y="20" width="20" height="10" fill="#185abd" /><rect x="2" y="9" width="15" height="15" rx="1.5" fill="#1a5bb8" /><text x="9.5" y="21" textAnchor="middle" fontSize="11" fontWeight="700" fill="#fff" fontFamily="Roboto">W</text></svg>
        <Under />
      </Tile>
      <Tile cls="bg-[#e3eaf0]">
        <svg width="24" height="34" viewBox="0 0 24 34"><rect x="15" y="0" width="9" height="34" fill="#e8a317" /><rect x="8" y="9" width="9" height="25" fill="#f2c811" /><rect x="1" y="18" width="9" height="16" fill="#f9e27d" /></svg>
        <Under w="w-[61px]" />
      </Tile>
      <div className="ml-auto flex items-center text-[17px]">
        <span className="w-[24px] h-[28px] rounded-full bg-gradient-to-b from-[#f5b53d] to-[#f06a0f]" />
        <span className="ml-[14px] whitespace-nowrap">31°C &nbsp;Sunny</span>
        <svg width="16" height="10" viewBox="0 0 16 10" fill="none" stroke="#222" className="ml-[30px]"><path d="M1 9L8 1L15 9" /></svg>
        <svg width="16" height="22" viewBox="0 0 16 22" fill="none" stroke="#222" className="ml-[15px]"><rect x="2" y="5" width="9" height="12" rx="1" /><path d="M11 9L15 7V15L11 13M5 2H8M5 20H8" /></svg>
        <svg width="20" height="20" viewBox="0 0 20 20" fill="#888" stroke="#222" className="ml-[10px]"><path d="M4 16C0 14 2 7 7 7C9 3 15 4 16 9C19 10 18 16 15 16ZM3 3L17 18" /></svg>
        <svg width="20" height="22" viewBox="0 0 20 22" fill="none" stroke="#222" className="ml-[11px]"><rect x="1" y="1" width="17" height="20" rx="1" /><path d="M6 7H12V15" /><circle cx="15" cy="18" r="4" fill="#2a76bd" stroke="none" /></svg>
        <svg width="20" height="20" viewBox="0 0 20 20" className="ml-[10px]"><rect x="1" y="3" width="15" height="12" fill="#111" /><circle cx="15" cy="14" r="5" fill="#1e8a3c" /><circle cx="15" cy="14" r="2" fill="#fff" /></svg>
        <svg width="20" height="20" viewBox="0 0 20 20" fill="none" stroke="#222" className="ml-[10px]"><path d="M2 7H5L10 3V17L5 13H2ZM13 7C14 9 14 11 13 13M16 4C18 8 18 12 16 16" /></svg>
        <svg width="20" height="20" viewBox="0 0 20 20" fill="none" stroke="#222" className="ml-[13px]"><path d="M2 18C2 9 8 3 17 2M6 18C6 12 10 7 16 6M10 18C10 15 12 12 15 11" /></svg>
        <span className="ml-[10px] text-[13.5px]">ENG</span>
        <div className="ml-[16px] w-[80px] flex flex-col items-center text-[14.5px] leading-[22px] whitespace-nowrap">
          <span>10:19 AM</span>
          <span>27-03-2024</span>
        </div>
        <svg width="22" height="22" viewBox="0 0 22 22" fill="none" stroke="#222" className="ml-[21px] mr-[29px]"><path d="M2 1H20V17H13L11 20L9 17H2Z" /></svg>
      </div>
    </div>
  );
}

export default function App() {
  return (
    <div className="w-[1920px] h-[1080px] flex flex-col overflow-hidden bg-[#f3f2f1] font-['Open_Sans',sans-serif]">
      <TitleBar />
      <Ribbon />
      <div className="h-[800px] flex shrink-0">
        <div className="w-[51px] shrink-0 border-r border-[#e1dfdd] flex flex-col items-center pt-[12px] gap-[26px] relative">
          <span className="absolute left-0 top-0 w-[3px] h-[44px] bg-[#117865]" />
          <svg width="24" height="24" viewBox="0 0 24 24" fill="#117865" stroke="#444"><path d="M4 20V10H7V20ZM10 20V4H13V20ZM16 20V8H19V20ZM2 22H22" /></svg>
          <svg width="24" height="24" viewBox="0 0 24 24" fill="none" stroke="#605e5c" strokeWidth="1.3"><path d="M2 3H22V21H2ZM2 9H22M2 15H22M9 3V21M15 3V21" /></svg>
          <svg width="24" height="24" viewBox="0 0 24 24" fill="none" stroke="#605e5c" strokeWidth="1.3"><path d="M2 3H12V11H2ZM2 14H10V22H2ZM15 8H23V22H15ZM2 6H12M2 17H10M15 11H23M12 7H15M10 18H15" /></svg>
        </div>
        <div className="w-[1376px] shrink-0 flex flex-col">
          <div className="h-[756px] bg-white pl-[24px] pt-[2px]"><ReportPage /></div>
          <div className="h-[44px] flex">
            <div className="w-[51px] relative flex justify-center pt-[4px] pl-[2px]">
              <svg width="24" height="24" viewBox="0 0 24 24" fill="none" stroke="#605e5c" strokeWidth="1.2"><path d="M1 2H23V18H1ZM12 18V22M7 22H17" /></svg>
              <span className="absolute bottom-[6px] left-[13px] w-[30px] h-[3px] rounded-full bg-[#117865]" />
            </div>
            <div className="w-[62px] flex justify-center pt-[3px]">
              <svg width="16" height="26" viewBox="0 0 16 26" fill="none" stroke="#605e5c" strokeWidth="1.2"><rect x="1" y="1" width="14" height="24" rx="1" /><path d="M7 22H9" /></svg>
            </div>
            <div className="w-[41px] flex items-center justify-between px-[2px] text-[#c8c6c4] pb-[6px]">
              <ChevronLeft size={12} />
              <ChevronRight size={12} />
            </div>
            <div className="ml-[6px] w-[94px] h-[44px] bg-white border-l border-[#a19f9d] border-b-[5px] border-b-[#117865] flex items-center justify-center text-[14px] text-[#252423]">Page 1</div>
            <div className="mt-[2px] w-[49px] h-[40px] bg-[#117865] text-white flex items-center justify-center"><Plus size={18} strokeWidth={3} /></div>
          </div>
        </div>
        <div className="w-[41px] shrink-0 border-l border-[#a19f9d] flex flex-col items-center pt-[12px] text-[#323130]">
          <ChevronsLeft size={24} strokeWidth={1.2} />
          <svg width="16" height="16" viewBox="0 0 16 16" fill="none" stroke="#323130" strokeWidth="1.1" className="mt-[15px] ml-[6px]"><path d="M15 1V15L1 8Z" /></svg>
          <span className="mt-[10px] [writing-mode:vertical-rl] text-[18px] leading-[20px] font-semibold">Filters</span>
        </div>
        <VizPane />
        <DataPane />
      </div>
      <div className="h-[28px] border-t-2 border-[#e1dfdd] flex items-center pl-[5px] text-[13px] text-[#605e5c] shrink-0">
        Page 1 of 1
        <div className="ml-auto flex items-center text-[#484644]">
          <span className="font-bold">-</span>
          <div className="ml-[6px] w-[125px] h-[1px] bg-[#605e5c] relative">
            <span className="absolute left-[50px] -top-[6px] w-[4px] h-[13px] bg-[#605e5c]" />
            <span className="absolute left-[62px] -top-[3px] w-px h-[7px] bg-[#605e5c]" />
          </div>
          <span className="ml-[6px] text-[16px]">+</span>
          <span className="ml-[17px] text-[#5c6f8c]">83%</span>
          <svg width="20" height="18" viewBox="0 0 20 18" fill="none" stroke="#8a8886" className="ml-[28px] mr-[22px]"><rect x="1" y="1" width="18" height="16" fill="#e8e8e8" /><path d="M5 7V4H8M12 4H15V7M15 11V14H12M8 14H5V11" stroke="#2a76bd" /></svg>
        </div>
      </div>
      <Taskbar />
    </div>
  );
}
